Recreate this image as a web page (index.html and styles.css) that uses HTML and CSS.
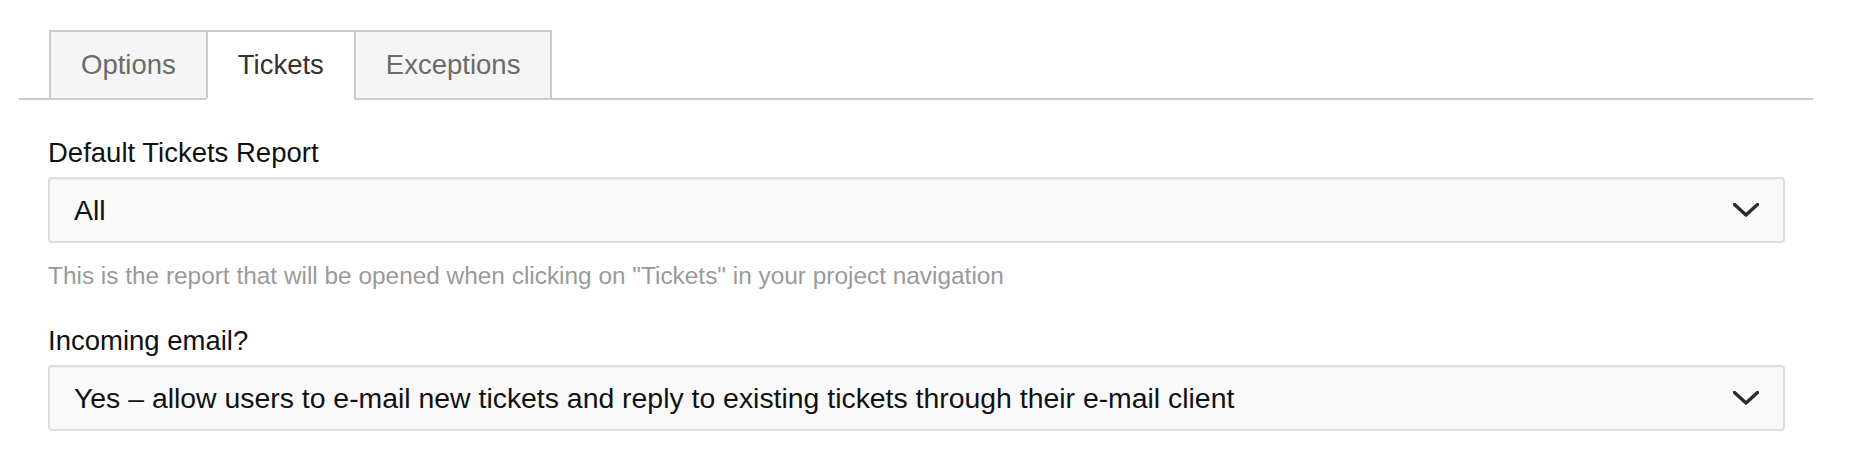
FILE: index.html
```html
<!DOCTYPE html>
<html lang="en">
  <head>
    <meta charset="UTF-8" />
    <meta name="viewport" content="width=device-width, initial-scale=1.0" />
    <title>Project Settings - Tickets</title>
    <link rel="stylesheet" href="styles.css">
  </head>
  <body>
    <div class="page">
      <ul class="tabs">
        <li class="tab">Options</li>
        <li class="tab active">Tickets</li>
        <li class="tab">Exceptions</li>
      </ul>

      <form class="settings">
        <div class="field">
          <label for="defaultReport">Default Tickets Report</label>
          <div class="select-wrap">
            <select id="defaultReport">
              <option>All</option>
              <option>Open</option>
              <option>Closed</option>
            </select>
            <svg class="chevron" viewBox="0 0 26 14" width="26" height="14">
              <path d="M1.5 1.5 L13 12 L24.5 1.5" />
            </svg>
          </div>
          <p class="help">This is the report that will be opened when clicking on "Tickets" in your project navigation</p>
        </div>

        <div class="field">
          <label for="incomingEmail">Incoming email?</label>
          <div class="select-wrap">
            <select id="incomingEmail">
              <option>Yes – allow users to e-mail new tickets and reply to existing tickets through their e-mail client</option>
              <option>No</option>
            </select>
            <svg class="chevron" viewBox="0 0 26 14" width="26" height="14">
              <path d="M1.5 1.5 L13 12 L24.5 1.5" />
            </svg>
          </div>
        </div>
      </form>
    </div>
  </body>
</html>
```

FILE: styles.css
```css
body {
  margin: 0;
  font-family: "Liberation Sans", Arial, Helvetica, sans-serif;
  background-color: #ffffff;
  color: #111111;
}
.page {
  padding: 30px 37px 0 19px;
}
.tabs {
  display: flex;
  list-style: none;
  margin: 0;
  padding: 0 0 0 30px;
  border-bottom: 2px solid #cccccc;
}
.tab {
  height: 66px;
  line-height: 66px;
  padding: 0 30px;
  margin-bottom: -2px;
  font-size: 27.5px;
  color: #6b6b6b;
  background-color: #f5f5f5;
  border: 2px solid #cccccc;
  cursor: pointer;
}
.tab + .tab {
  margin-left: -2px;
}
.tab.active {
  color: #333333;
  background-color: #ffffff;
  border-bottom-color: #ffffff;
}
.settings {
  padding: 37px 28px 0 29px;
}
.field + .field {
  margin-top: 34px;
}
label {
  display: block;
  font-size: 27.5px;
  line-height: 32px;
  color: #111111;
  margin-bottom: 8px;
}
.select-wrap {
  position: relative;
}
select {
  display: block;
  width: 100%;
  height: 66px;
  padding: 0 80px 0 24px;
  font-family: inherit;
  font-size: 28.4px;
  color: #111111;
  background-color: #f9f9f9;
  border: 2px solid #dddddd;
  border-radius: 4px;
  box-shadow: inset 0 1px 1px rgba(0, 0, 0, 0.04);
  appearance: none;
  -webkit-appearance: none;
  outline: none;
}
.chevron {
  position: absolute;
  right: 26px;
  top: 26px;
  fill: none;
  stroke: #2b2b2b;
  stroke-width: 3.4;
  stroke-linecap: round;
  stroke-linejoin: round;
  pointer-events: none;
}
.help {
  margin: 18px 0 0;
  font-size: 24.4px;
  line-height: 30px;
  color: #9a9a9a;
}
```
